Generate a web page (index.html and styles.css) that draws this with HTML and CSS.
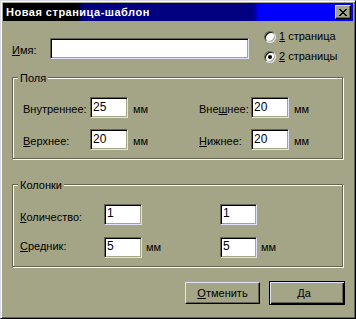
FILE: index.html
```html
<!DOCTYPE html>
<html lang="ru">
<head>
<meta charset="utf-8">
<title>Новая страница-шаблон</title>
<link rel="stylesheet" href="styles.css">
</head>
<body>
<div class="window">
  <div class="titlebar">
    <span class="title">Новая страница-шаблон</span>
    <button class="close" type="button" aria-label="Закрыть">
      <svg class="close-glyph" width="8" height="7" viewBox="0 0 8 7" shape-rendering="crispEdges">
        <path fill="#000" d="M0 0h2v1h-2z M6 0h2v1h-2z M1 1h2v1h-2z M5 1h2v1h-2z M2 2h4v1h-4z M3 3h2v1h-2z M2 4h4v1h-4z M1 5h2v1h-2z M5 5h2v1h-2z M0 6h2v1h-2z M6 6h2v1h-2z"/>
      </svg>
    </button>
  </div>
  <div class="dialog">
    <div class="top">
      <div class="name">
        <span class="name-label"><u>И</u>мя:</span>
        <div class="field name-field"></div>
      </div>
      <div class="radios">
        <div class="radio-row"><span class="radio"></span><span><u>1</u> страница</span></div>
        <div class="radio-row"><span class="radio checked"></span><span><u>2</u> страницы</span></div>
      </div>
    </div>

    <div class="group margins">
      <span class="legend">Поля</span>
      <div class="margins-grid">
        <span class="lbl">Внутреннее:</span>
        <div class="field">25</div>
        <span class="mm">мм</span>
        <span class="lbl">Вне<u>ш</u>нее:</span>
        <div class="field">20</div>
        <span class="mm">мм</span>

        <span class="lbl"><u>В</u>ерхнее:</span>
        <div class="field">20</div>
        <span class="mm">мм</span>
        <span class="lbl"><u>Н</u>ижнее:</span>
        <div class="field">20</div>
        <span class="mm">мм</span>
      </div>
    </div>

    <div class="group columns">
      <span class="legend">Колонки</span>
      <div class="columns-grid">
        <span class="lbl lbl-count"><u>К</u>оличество:</span>
        <div class="field">1</div>
        <span></span>
        <div class="field">1</div>
        <span></span>

        <span class="lbl lbl-gutter"><u>С</u>редник:</span>
        <div class="field">5</div>
        <span class="mm mm-gutter">мм</span>
        <div class="field">5</div>
        <span class="mm mm-gutter">мм</span>
      </div>
    </div>

    <div class="buttons">
      <button class="btn" type="button"><u>О</u>тменить</button>
      <button class="btn default" type="button"><u>Д</u>а</button>
    </div>
  </div>
</div>
</body>
</html>
```
FILE: styles.css
```css
html, body {
  margin: 0;
  padding: 0;
  background: #a4a486;
}

body {
  font-family: "Liberation Sans", Arial, sans-serif;
  font-size: 11px;
  line-height: 13px;
  color: #000;
}

u {
  text-decoration: underline;
  text-underline-offset: 1px;
}

.window {
  width: 356px;
  height: 319px;
  box-sizing: border-box;
  border: 1px solid;
  border-color: #d8d8e8 #000 #000 #d8d8e8;
  box-shadow: inset 1px 1px #fff, inset -1px -1px #646450;
  padding: 2px;
  background: #a4a486;
}

.titlebar {
  height: 18px;
  display: flex;
  align-items: center;
  justify-content: space-between;
  padding-left: 3px;
  color: #fff;
  background: linear-gradient(to right,
    #000 0, #000 74px,
    #000080 80px, #000080 250px,
    #0000ff 256px, #0000ff 100%);
}

.title {
  font-weight: bold;
  letter-spacing: 0.5px;
  line-height: 18px;
}

.close {
  width: 16px;
  height: 14px;
  margin-right: 2px;
  padding: 0;
  box-sizing: border-box;
  border: 1px solid;
  border-color: #e0e0f8 #000 #000 #e0e0f8;
  box-shadow: inset -1px -1px #646450;
  background: #a4a486;
  display: flex;
  align-items: center;
  justify-content: center;
}

.close-glyph {
  display: block;
}

/* top row */
.top {
  display: flex;
  align-items: flex-start;
  padding: 9px 0 0 9px;
}

.name {
  display: flex;
  margin-top: 8px;
}

.name-label {
  width: 38px;
  padding-top: 6px;
}

.field {
  box-sizing: border-box;
  height: 21px;
  background: #fff;
  border: 1px solid;
  border-color: #646450 #e0e0f8 #e0e0f8 #646450;
  box-shadow: inset 1px 1px #000, inset -1px -1px #a4a486;
  padding: 3px 0 0 2px;
  font-size: 12px;
}

.name-field {
  width: 199px;
}

.radios {
  margin-left: 15px;
  display: flex;
  flex-direction: column;
  gap: 7px;
}

.radio-row {
  display: flex;
  align-items: flex-start;
  gap: 3px;
}

.radio {
  position: relative;
  width: 12px;
  height: 12px;
  margin-top: 1px;
  box-sizing: border-box;
  border-radius: 50%;
  border: 1px solid;
  border-color: #646450 #e0e0f8 #e0e0f8 #646450;
  box-shadow: inset 1px 1px #000, inset -1px -1px #a4a486;
  background: #fff;
}

.radio.checked::after {
  content: "";
  position: absolute;
  left: 3px;
  top: 3px;
  width: 4px;
  height: 4px;
  border-radius: 50%;
  background: #000;
}

/* group boxes */
.group {
  position: relative;
  margin-left: 9px;
  width: 331px;
  box-sizing: border-box;
  border: 1px solid #646450;
  box-shadow: inset 1px 1px #fff, 1px 1px #fff;
}

.legend {
  position: absolute;
  top: -6px;
  left: 5px;
  padding: 0 2px;
  background: #a4a486;
}

.margins {
  margin-top: 14px;
}

.margins-grid {
  display: grid;
  grid-template-columns: 67px 38px 71px 52px 38px auto;
  grid-auto-rows: 21px;
  row-gap: 11px;
  padding: 19px 0 8px 10px;
}

.lbl {
  padding-top: 6px;
  white-space: nowrap;
}

.mm {
  padding-top: 6px;
  padding-left: 5px;
}

.columns {
  margin-top: 25px;
}

.columns-grid {
  display: grid;
  grid-template-columns: 84px 38px 78px 37px auto;
  grid-auto-rows: 21px;
  row-gap: 12px;
  padding: 19px 0 8px 7px;
}

.columns-grid .field {
  padding-top: 2px;
}

.lbl-count {
  padding-top: 7px;
}

.lbl-gutter {
  padding-top: 3px;
}

.mm-gutter {
  padding-top: 4px;
  padding-left: 4px;
}

/* buttons */
.buttons {
  display: flex;
  justify-content: flex-end;
  align-items: flex-start;
  gap: 9px;
  padding-right: 8px;
  margin-top: 14px;
}

.btn {
  width: 75px;
  height: 22px;
  margin-top: 1px;
  box-sizing: border-box;
  border: 1px solid;
  border-color: #e0e0f8 #000 #000 #e0e0f8;
  box-shadow: inset -1px -1px #646450;
  background: #a4a486;
  font: inherit;
  color: #000;
  padding: 0;
  text-align: center;
}

.btn.default {
  width: 76px;
  height: 24px;
  margin-top: 0;
  border: 1px solid #000;
  box-shadow: inset 1px 1px #e0e0f8, inset -1px -1px #000, inset -2px -2px #646450;
  padding-right: 6px;
}
```
